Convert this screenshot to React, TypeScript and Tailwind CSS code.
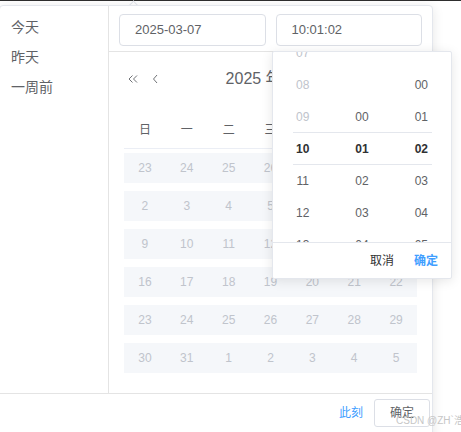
const SHORTCUTS = ["今天", "昨天", "一周前"];
const WEEK = ["日", "一", "二", "三", "四", "五", "六"];

const WEEKS = [
  [23, 24, 25, 26, 27, 28, 1],
  [2, 3, 4, 5, 6, 7, 8],
  [9, 10, 11, 12, 13, 14, 15],
  [16, 17, 18, 19, 20, 21, 22],
  [23, 24, 25, 26, 27, 28, 29],
  [30, 31, 1, 2, 3, 4, 5],
];

// each spinner column, top row first ("" = empty slot)
const HOURS = ["07", "08", "09", "10", "11", "12", "13"];
const MINUTES = ["", "", "00", "01", "02", "03", "04"];
const SECONDS = ["", "00", "01", "02", "03", "04", "05"];

function Chevron({ double, flip }: { double?: boolean; flip?: boolean }) {
  return (
    <svg
      width={double ? 10 : 6}
      height="10"
      viewBox={double ? "0 0 10 10" : "0 0 6 10"}
      className={flip ? "rotate-180" : ""}
    >
      {double ? (
        <>
          <polyline points="4.5,1.5 1,5 4.5,8.5" fill="none" stroke="#606266" strokeWidth="0.9" />
          <polyline points="9,1.5 5.5,5 9,8.5" fill="none" stroke="#606266" strokeWidth="0.9" />
        </>
      ) : (
        <polyline points="5,1 1.5,5 5,9" fill="none" stroke="#606266" strokeWidth="0.9" />
      )}
    </svg>
  );
}

function SpinnerColumn({ items }: { items: string[] }) {
  return (
    <div className="flex-1 flex flex-col -mt-[15px]">
      {items.map((v, i) => {
        const disabled = items === HOURS && i < 3;
        const active = i === 3;
        return (
          <div
            key={i}
            className={`h-8 leading-8 text-center text-xs shrink-0 ${
              active
                ? "font-bold text-[#303133]"
                : disabled
                ? "text-[#c0c4cc]"
                : "text-[#606266]"
            }`}
          >
            {v}
          </div>
        );
      })}
    </div>
  );
}

export default function App() {
  return (
    <div className="relative w-[461px] h-[432px] overflow-hidden bg-white font-['Liberation_Sans','Noto_Sans_CJK_SC',sans-serif]">
      <div className="h-px bg-[#2e2e2e]" />

      {/* popper arrow */}
      <div className="absolute left-[130px] top-[2px] w-[7px] h-[7px] rotate-45 bg-white border-l border-t border-[#e4e7ed]" />

      {/* picker panel */}
      <div className="relative mt-[4px] -ml-px w-[434px] h-[500px] bg-white border border-[#e4e7ed] rounded-[4px] shadow-[0_2px_12px_0_rgba(0,0,0,0.1)] flex flex-col">
        <div className="flex h-[387px]">
          {/* sidebar */}
          <div className="w-[109px] shrink-0 border-r border-[#e4e4e4] pt-[6px]">
            {SHORTCUTS.map((s) => (
              <div key={s} className="pl-[11px] leading-[30px] text-sm text-[#606266]">
                {s}
              </div>
            ))}
          </div>

          {/* body */}
          <div className="flex-1 flex flex-col">
            <div className="flex px-[5px] pt-2 pb-[5px] border-b border-[#e4e4e4]">
              <div className="w-1/2 px-[5px]">
                <div className="h-8 border border-[#dcdfe6] rounded-[4px] pl-[15px] flex items-center text-[13px] text-[#606266]">
                  2025-03-07
                </div>
              </div>
              <div className="w-1/2 px-[5px]">
                <div className="h-8 border border-[#dcdfe6] rounded-[4px] pl-[15px] flex items-center text-[13px] text-[#606266]">
                  10:01:02
                </div>
              </div>
            </div>

            <div className="mx-[15px]">
              <div className="mt-3 h-[30px] flex items-center">
                <div className="pl-[4px] flex items-center gap-[14px]">
                  <Chevron double />
                  <Chevron />
                </div>
                <div className="flex-1 text-center text-base text-[#606266]">2025 年 3 月</div>
                <div className="pr-[4px] flex items-center gap-[14px]">
                  <Chevron flip />
                  <Chevron double flip />
                </div>
              </div>

              <div className="mt-[21px] h-[34px] border-b border-[#ebeef5] grid grid-cols-7 pt-[6px]">
                {WEEK.map((d) => (
                  <div key={d} className="text-center text-xs leading-[18px] text-[#606266]">
                    {d}
                  </div>
                ))}
              </div>

              {WEEKS.map((row, r) => (
                <div key={r} className="h-[38px] py-1">
                  <div className="h-[30px] bg-[#f5f7fa] grid grid-cols-7">
                    {row.map((d, c) => (
                      <div
                        key={c}
                        className="flex items-center justify-center text-xs text-[#c0c4cc]"
                      >
                        {d}
                      </div>
                    ))}
                  </div>
                </div>
              ))}
            </div>
          </div>
        </div>

        {/* footer */}
        <div className="border-t border-[#e4e4e4] h-[40px] pt-[5px] pr-[2px] flex items-start justify-end">
          <div className="h-[28px] flex items-center text-xs text-[#409eff] mr-[11px]">此刻</div>
          <div className="h-[28px] w-[56px] border border-[#dcdfe6] rounded-[3px] flex items-center justify-center text-xs text-[#606266]">
            确定
          </div>
        </div>
      </div>

      {/* time spinner dropdown */}
      <div className="absolute left-[272px] top-[51px] w-[180px] h-[228px] bg-white border border-[#e4e7ed] rounded-[2px] shadow-[0_2px_12px_0_rgba(0,0,0,0.1)] flex flex-col">
        <div className="relative h-[190px] overflow-hidden flex">
          <SpinnerColumn items={HOURS} />
          <SpinnerColumn items={MINUTES} />
          <SpinnerColumn items={SECONDS} />
          <div className="absolute left-[20px] right-[19px] top-[80px] h-[33px] border-y border-[#e4e7ed]" />
        </div>
        <div className="flex-1 border-t border-[#e4e7ed] flex items-center justify-end pr-[13px] gap-[20px] text-xs">
          <span className="text-[#303133]">取消</span>
          <span className="text-[#409eff] font-bold">确定</span>
        </div>
      </div>

      {/* watermark */}
      <div className="absolute left-[396px] top-[414px] text-[10px] leading-[14px] text-[#c6c6c6] whitespace-nowrap">
        CSDN @ZH`浩
      </div>
    </div>
  );
}
